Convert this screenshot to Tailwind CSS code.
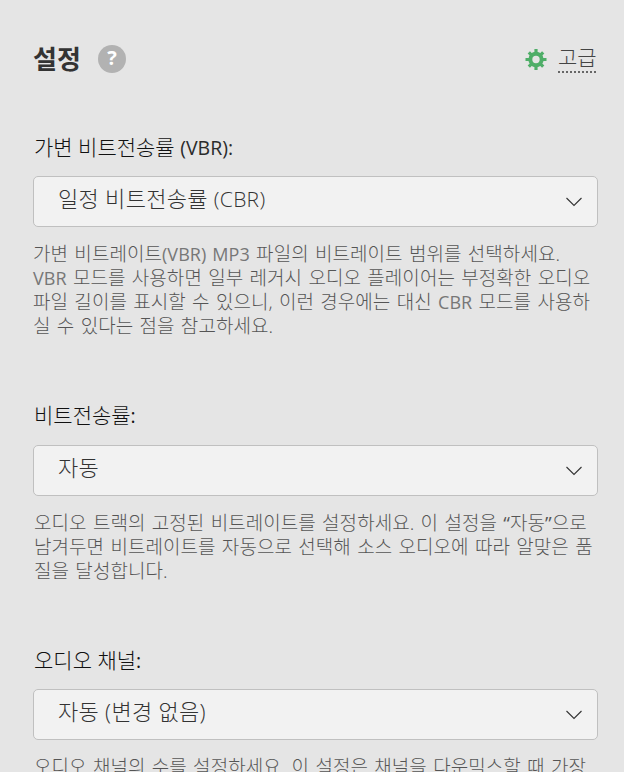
<!DOCTYPE html>
<html lang="ko">
<head>
    <meta charset="UTF-8">
    <meta name="viewport" content="width=device-width, initial-scale=1.0">
    <title>설정</title>
    <script src="https://cdn.jsdelivr.net/npm/@tailwindcss/browser@4"></script>
</head>
<body class="bg-[#e5e5e5] font-['Open_Sans','Noto_Sans_CJK_KR',sans-serif] text-[#2b2b2b]">
<div class="h-[772px] overflow-hidden pl-[33px] pr-[26px] pt-[43px]">

    <div class="flex h-8 items-center">
        <h1 class="w-[65px] whitespace-nowrap text-[26px] font-bold leading-8 text-[#333]">설정</h1>
        <span class="-mt-px flex size-7 items-center justify-center rounded-full bg-[#b2b2b2] pb-px text-[20px] font-bold text-white">?</span>
        <div class="ml-auto mr-[2px] flex items-center">
            <svg class="mr-[11px] size-[22px]" viewBox="0 0 22 22" fill="none" stroke="#4fae68">
                <circle cx="11" cy="11.5" r="5.7" stroke-width="4" />
                <path d="M11 1v4M11 18v4M0.5 11.5h4M17.5 11.5h4M3.8 4.3l2.8 2.8M15.4 15.9l2.8 2.8M18.2 4.3l-2.8 2.8M6.6 15.9l-2.8 2.8" stroke-width="3.2" />
            </svg>
            <a class="h-[28px] w-[38px] whitespace-nowrap border-b-2 border-dotted border-[#666] text-[21px] font-light leading-[24px] text-[#444]">고급</a>
        </div>
    </div>

    <section class="mt-[57px]">
        <label class="block h-[30px] pl-px text-[21px] font-light leading-[30px] text-[#111]">가변 비트전송률 <span class="text-[19.5px] font-normal text-[#2b2b2b]">(VBR):</span></label>
        <div class="mt-[14px] flex h-[51px] items-center justify-between rounded-[5px] border border-[#c0c0c0] bg-[#f2f2f2] pl-6 pr-[15px]">
            <span class="pb-1.5 text-[22px] font-light tracking-[0.3px] text-[#333]">일정 비트전송률 <span class="text-[21px]">(CBR)</span></span>
            <svg class="h-[10px] w-4" viewBox="0 0 16 10" fill="none" stroke="#333" stroke-width="1.1"><path d="M0.5 1l7.5 7.5L15.5 1" /></svg>
        </div>
        <p class="mt-[15px] whitespace-nowrap text-[19px] font-light leading-6 tracking-[0.05px] [word-spacing:1.3px] text-[#555]">가변 비트레이트<span class="text-[18px] font-normal text-[#777]">(VBR) MP3</span> 파일의 비트레이트 범위를 선택하세요.<br><span class="text-[18px] font-normal text-[#777]">VBR</span> 모드를 사용하면 일부 레거시 오디오 플레이어는 부정확한 오디오<br>파일 길이를 표시할 수 있으니, 이런 경우에는 대신 <span class="text-[18px] font-normal text-[#777]">CBR</span> 모드를 사용하<br>실 수 있다는 점을 참고하세요.</p>
    </section>

    <section class="mt-[62px]">
        <label class="block h-[30px] pl-px text-[21px] font-light leading-[30px] text-[#111]">비트전송률<span class="text-[19.5px] font-normal">:</span></label>
        <div class="mt-[15px] flex h-[51px] items-center justify-between rounded-[5px] border border-[#c0c0c0] bg-[#f2f2f2] pl-6 pr-[15px]">
            <span class="pb-1.5 text-[22px] font-light tracking-[0.3px] text-[#333]">자동</span>
            <svg class="h-[10px] w-4" viewBox="0 0 16 10" fill="none" stroke="#333" stroke-width="1.1"><path d="M0.5 1l7.5 7.5L15.5 1" /></svg>
        </div>
        <p class="mt-[15px] whitespace-nowrap pl-px text-[19px] font-light leading-6 tracking-[0.05px] [word-spacing:1.3px] text-[#555]">오디오 트랙의 고정된 비트레이트를 설정하세요. 이 설정을 <span class="font-normal">“</span>자동<span class="font-normal">”</span>으로<br>남겨두면 비트레이트를 자동으로 선택해 소스 오디오에 따라 알맞은 품<br>질을 달성합니다.</p>
    </section>

    <section class="mt-[62px]">
        <label class="block h-[30px] pl-px text-[21px] font-light leading-[30px] text-[#111]">오디오 채널<span class="text-[19.5px] font-normal">:</span></label>
        <div class="mt-[14px] flex h-[51px] items-center justify-between rounded-[5px] border border-[#c0c0c0] bg-[#f2f2f2] pl-6 pr-[15px]">
            <span class="pb-1.5 text-[22px] font-light tracking-[0.3px] text-[#333]">자동 (변경 없음)</span>
            <svg class="h-[10px] w-4" viewBox="0 0 16 10" fill="none" stroke="#333" stroke-width="1.1"><path d="M0.5 1l7.5 7.5L15.5 1" /></svg>
        </div>
        <p class="mt-[15px] whitespace-nowrap pl-px text-[19px] font-light leading-6 tracking-[0.05px] [word-spacing:1.3px] text-[#555]">오디오 채널의 수를 설정하세요. 이 설정은 채널을 다운믹스할 때 가장</p>
    </section>

</div>
</body>
</html>
